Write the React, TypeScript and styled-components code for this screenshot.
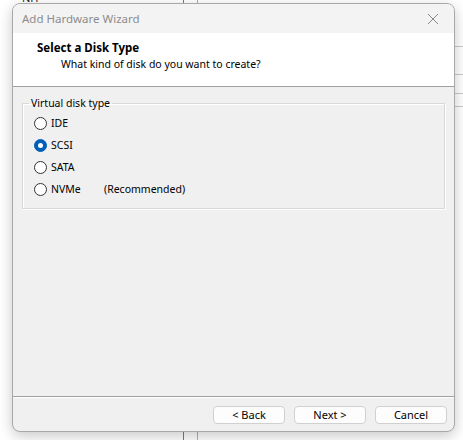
import styled, { createGlobalStyle } from "styled-components";

const GlobalStyle = createGlobalStyle`
  html, body {
    margin: 0;
    padding: 0;
    background: #ffffff;
  }
  body {
    font-family: "Noto Sans", "DejaVu Sans", sans-serif;
    color: #000;
  }
`;

const options = [
  { id: "ide", label: "IDE" },
  { id: "scsi", label: "SCSI" },
  { id: "sata", label: "SATA" },
  { id: "nvme", label: "NVMe", note: "(Recommended)" },
];

export default function App() {
  const selected = "scsi";

  return (
    <>
      <GlobalStyle />
      <Desktop>
        <LeftPane>
          <Peek>NH</Peek>
        </LeftPane>
        <NarrowPane />
        <RightPane>
          <PaneRow $h={47} />
          <PaneRow $h={28} />
          <PaneRow $h={19} />
          <PaneRow $h={13} />
        </RightPane>

        <Window>
          <TitleBar>
            <Title>Add Hardware Wizard</Title>
            <CloseButton aria-label="Close">
              <svg width="12" height="12" viewBox="0 0 12 12">
                <path d="M1 1 L11 11 M11 1 L1 11" stroke="#8a8a8a" strokeWidth="1" fill="none" />
              </svg>
            </CloseButton>
          </TitleBar>

          <Header>
            <HeaderTitle>Select a Disk Type</HeaderTitle>
            <HeaderSub>What kind of disk do you want to create?</HeaderSub>
          </Header>

          <Body>
            <Group>
              <Legend>Virtual disk type</Legend>
              {options.map((o) => (
                <RadioRow key={o.id}>
                  <Radio $checked={o.id === selected} />
                  <RadioLabel>{o.label}</RadioLabel>
                  {o.note && <Note>{o.note}</Note>}
                </RadioRow>
              ))}
            </Group>
          </Body>

          <Footer>
            <Button>&lt; Back</Button>
            <Button>Next &gt;</Button>
            <Button>Cancel</Button>
          </Footer>
        </Window>
      </Desktop>
    </>
  );
}

const Desktop = styled.div`
  position: relative;
  width: 463px;
  height: 440px;
  overflow: hidden;
  display: flex;
  background: #ffffff;
`;

const LeftPane = styled.div`
  width: 183px;
  border-right: 1px solid #7a7a7a;
`;

const Peek = styled.div`
  font-size: 11px;
  line-height: 12px;
  margin: -8px 0 0 22px;
  color: #222;
`;

const NarrowPane = styled.div`
  width: 13px;
  border-right: 1px solid #b0b0b0;
`;

const RightPane = styled.div`
  flex: 1;
  display: flex;
  flex-direction: column;
`;

const PaneRow = styled.div<{ $h: number }>`
  height: ${(p) => p.$h - 1}px;
  border-bottom: 1px solid #c8c8c8;
`;

const Window = styled.div`
  position: absolute;
  left: 12px;
  top: 3px;
  width: 443px;
  height: 429px;
  box-sizing: border-box;
  border: 1px solid #a8a8a8;
  border-radius: 8px;
  background: #f0f0f0;
  box-shadow: 0 4px 14px rgba(0, 0, 0, 0.22);
  display: flex;
  flex-direction: column;
  overflow: hidden;
`;

const TitleBar = styled.div`
  height: 29px;
  flex-shrink: 0;
  display: flex;
  align-items: center;
  justify-content: space-between;
  padding: 0 10px 0 9px;
  background: #f3f3f3;
`;

const Title = styled.div`
  font-size: 11.5px;
  color: #8c8c8c;
`;

const CloseButton = styled.div`
  display: flex;
  align-items: center;
  justify-content: center;
  width: 16px;
  height: 16px;
  margin-right: 3px;
`;

const Header = styled.div`
  height: 54px;
  flex-shrink: 0;
  box-sizing: border-box;
  background: #ffffff;
  border-bottom: 1px solid #a0a0a0;
  padding: 7px 0 0 24px;
`;

const HeaderTitle = styled.div`
  font-size: 11.5px;
  font-weight: 700;
  line-height: 16px;
`;

const HeaderSub = styled.div`
  font-size: 10.5px;
  line-height: 16px;
  padding-left: 24px;
`;

const Body = styled.div`
  flex: 1;
  padding: 9px 9px 0 9px;
`;

const Group = styled.fieldset`
  margin: 0;
  padding: 2px 0 8px 11px;
  border: 1px solid #d9d9d9;
  box-shadow: 1px 1px 0 #ffffff, inset 1px 1px 0 #ffffff;
`;

const Legend = styled.legend`
  font-size: 10.5px;
  padding: 0 2px;
  margin-left: -5px;
  color: #000;
`;

const RadioRow = styled.div`
  height: 22px;
  display: flex;
  align-items: center;
  font-size: 10.5px;
`;

const Radio = styled.span<{ $checked: boolean }>`
  width: 13px;
  height: 13px;
  box-sizing: border-box;
  border-radius: 50%;
  border: 1px solid ${(p) => (p.$checked ? "#005fb8" : "#333333")};
  background: ${(p) => (p.$checked ? "#005fb8" : "#ffffff")};
  display: flex;
  align-items: center;
  justify-content: center;
  margin-right: 4px;

  &::after {
    content: "";
    display: ${(p) => (p.$checked ? "block" : "none")};
    width: 5px;
    height: 5px;
    border-radius: 50%;
    background: #ffffff;
  }
`;

const RadioLabel = styled.span`
  width: 53px;
`;

const Note = styled.span``;

const Footer = styled.div`
  height: 35px;
  flex-shrink: 0;
  box-sizing: border-box;
  border-top: 1px solid #a0a0a0;
  box-shadow: inset 0 1px 0 #ffffff;
  display: flex;
  justify-content: flex-end;
  align-items: flex-start;
  gap: 9px;
  padding: 9px 7px 0 0;
`;

const Button = styled.button`
  width: 72px;
  height: 18px;
  box-sizing: border-box;
  padding: 0;
  font-family: "Noto Sans", "DejaVu Sans", sans-serif;
  font-size: 11px;
  line-height: 16px;
  color: #000;
  background: #fdfdfd;
  border: 1px solid #d0d0d0;
  border-radius: 4px;
`;
